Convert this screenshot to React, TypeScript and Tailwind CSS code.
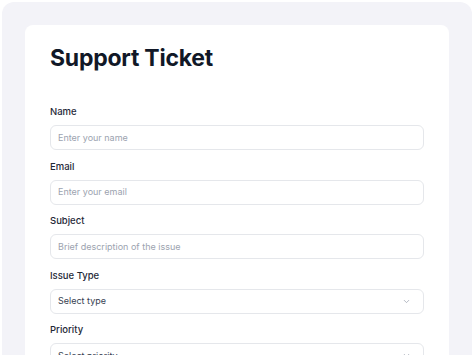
import React from 'react';
import { ChevronDown } from 'lucide-react';

const fields = [
  { label: 'Name', placeholder: 'Enter your name', type: 'input' },
  { label: 'Email', placeholder: 'Enter your email', type: 'input' },
  { label: 'Subject', placeholder: 'Brief description of the issue', type: 'input' },
  { label: 'Issue Type', placeholder: 'Select type', type: 'select' },
  { label: 'Priority', placeholder: 'Select priority', type: 'select' },
];

const App: React.FC = () => {
  return (
    <div className="h-[355px] overflow-hidden bg-white p-[2px]" style={{ fontFamily: 'Inter, sans-serif' }}>
      <div className="h-[400px] rounded-xl bg-[#f3f3f8] px-[23px] pt-[23px]">
        <div className="rounded-lg bg-white px-[25px] pt-[17px] pb-8">
          <h1 className="text-[23px] font-bold leading-[32px] tracking-[-0.01em] text-[#111827]">Support Ticket</h1>
          <div className="mt-[32px] flex flex-col gap-[10.5px]">
            {fields.map((f, i) => (
              <div key={i}>
                <label className="block text-[9.5px] font-medium leading-[12px] text-[#1f2937]">{f.label}</label>
                <div className="mt-[7px] flex h-[25px] items-center justify-between rounded-md border border-[#e5e7eb] pl-[7px] pr-[12px]">
                  {f.type === 'input' ? (
                    <input
                      className="w-full bg-transparent text-[9px] text-[#1f2937] outline-none placeholder:text-[#9ca3af]"
                      placeholder={f.placeholder}
                    />
                  ) : (
                    <>
                      <span className="text-[9px] text-[#374151]">{f.placeholder}</span>
                      <ChevronDown size={9} className="text-[#9ca3af]" />
                    </>
                  )}
                </div>
              </div>
            ))}
          </div>
        </div>
      </div>
    </div>
  );
};

export default App;
